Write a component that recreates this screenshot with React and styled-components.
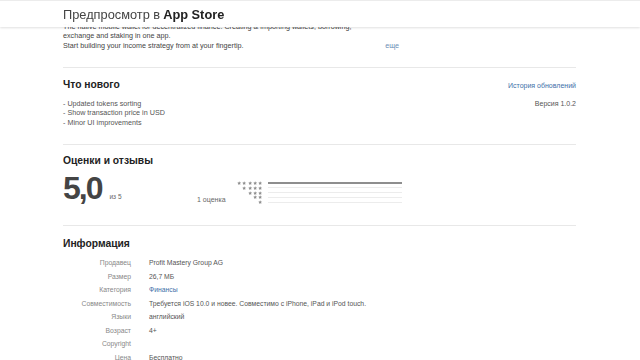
import styled, { createGlobalStyle } from 'styled-components';

const GlobalStyle = createGlobalStyle`
  html, body {
    margin: 0;
    background: #fff;
    font-family: 'Liberation Sans', Arial, sans-serif;
    color: #333;
  }
`;

const Header = styled('header')`
  position: fixed;
  top: 0;
  left: 0;
  right: 0;
  height: 27px;
  z-index: 10;
  display: flex;
  align-items: center;
  padding-left: 63px;
  background: rgba(255, 255, 255, 0.97);
  border-top: 1px solid #ececec;
  box-shadow: 0 1px 2px rgba(0, 0, 0, 0.12);
  font-size: 12.8px;
  color: #444;
  box-sizing: border-box;

  b {
    color: #222;
    margin-left: 3px;
  }
`;

const Page = styled('main')`
  width: 513px;
  margin-left: 63px;
  padding-top: 22px;
`;

const Description = styled('div')`
  position: relative;
  width: 336px;
  font-size: 7.2px;
  line-height: 9.3px;
  color: #444;
  padding-bottom: 17px;
  white-space: nowrap;
`;

const More = styled('span')`
  position: absolute;
  right: 0;
  bottom: 17px;
  color: #6b8db5;
`;

const Section = styled('section')`
  border-top: 1px solid #e8e8e8;
  padding: ${(p) => p.$pad || '11px 0 17px'};
`;

const Heading = styled('h2')`
  margin: 0;
  font-size: 10.3px;
  line-height: 12px;
  font-weight: bold;
  color: #222;
`;

const Split = styled('div')`
  display: flex;
  justify-content: space-between;
  align-items: flex-start;
`;

const Notes = styled('ul')`
  margin: 8px 0 0;
  padding: 0;
  list-style: none;
  font-size: 7.2px;
  line-height: 9.5px;
  color: #555;
`;

const Side = styled('div')`
  text-align: right;
  font-size: 7px;
  line-height: 9.5px;
  color: #555;
  padding-top: 2px;
`;

const Link = styled('div')`
  color: ${(p) => (p.$blue ? '#3e6fa8' : 'inherit')};
  margin-bottom: ${(p) => p.$gap || 0}px;
`;

const RatingRow = styled('div')`
  display: grid;
  grid-template-columns: 134px auto;
  align-items: end;
  margin-top: 5px;
`;

const Score = styled('div')`
  display: flex;
  align-items: baseline;
`;

const Big = styled('span')`
  font-size: 32px;
  line-height: 32px;
  font-weight: bold;
  letter-spacing: -2px;
  color: #444;
`;

const OutOf = styled('span')`
  font-size: 6.5px;
  color: #666;
  margin-left: 8px;
`;

const Histogram = styled('div')`
  display: flex;
  align-items: flex-end;
  gap: 11px;
`;

const Count = styled('span')`
  font-size: 7px;
  color: #666;
  padding-bottom: 1px;
`;

const Bars = styled('div')`
  display: grid;
  grid-template-columns: 26px 134px;
  column-gap: 5px;
`;

const Stars = styled('div')`
  display: flex;
  justify-content: flex-end;
  gap: 1px;
  height: 4.7px;
  align-items: center;
`;

const Track = styled('div')`
  height: 4.7px;
  display: flex;
  align-items: center;

  &::before {
    content: '';
    flex: 1;
    height: ${(p) => (p.$full ? 2 : 1)}px;
    background: ${(p) => (p.$full ? '#8e8e8e' : '#ececec')};
  }
`;

const InfoList = styled('dl')`
  margin: 6px 0 0;
  display: grid;
  grid-template-columns: 68px auto;
  column-gap: 18px;
  font-size: 6.8px;
  line-height: 13.5px;
`;

const Label = styled('dt')`
  text-align: right;
  color: #888;
  white-space: nowrap;
`;

const Value = styled('dd')`
  margin: 0;
  color: ${(p) => (p.$blue ? '#3e6fa8' : '#555')};
`;

const Star = () => (
  <svg width='4.3' height='4.3' viewBox='0 0 10 10'>
    <path d='M5 0.5l1.4 3 3.1.3-2.4 2.1.8 3.1L5 7.3 2.1 9l.8-3.1L.5 3.8l3.1-.3z' fill='#8e8e8e' />
  </svg>
);

const info = [
  ['Продавец', 'Profit Mastery Group AG'],
  ['Размер', '26,7 МБ'],
  ['Категория', 'Финансы', true],
  ['Совместимость', 'Требуется iOS 10.0 и новее. Совместимо с iPhone, iPad и iPod touch.'],
  ['Языки', 'английский'],
  ['Возраст', '4+'],
  ['Copyright', ''],
  ['Цена', 'Бесплатно'],
];

const App = () => (
  <>
    <GlobalStyle />
    <Header>
      Предпросмотр в <b>App Store</b>
    </Header>
    <Page>
      <Description>
        The native mobile wallet for decentralized finance. Creating &amp; importing wallets, borrowing,
        <br />
        exchange and staking in one app.
        <br />
        Start building your income strategy from at your fingertip.
        <More>еще</More>
      </Description>

      <Section>
        <Split>
          <div>
            <Heading>Что нового</Heading>
            <Notes>
              <li>- Updated tokens sorting</li>
              <li>- Show transaction price in USD</li>
              <li>- Minor UI improvements</li>
            </Notes>
          </div>
          <Side>
            <Link $blue $gap={9}>История обновлений</Link>
            <Link>Версия 1.0.2</Link>
          </Side>
        </Split>
      </Section>

      <Section $pad='10px 0 21px'>
        <Heading>Оценки и отзывы</Heading>
        <RatingRow>
          <Score>
            <Big>5,0</Big>
            <OutOf>из 5</OutOf>
          </Score>
          <Histogram>
            <Count>1 оценка</Count>
            <Bars>
              {[5, 4, 3, 2, 1].map((n) => [
                <Stars key={`s${n}`}>
                  {Array.from({ length: n }, (_, i) => (
                    <Star key={i} />
                  ))}
                </Stars>,
                <Track key={`t${n}`} $full={n === 5} />,
              ])}
            </Bars>
          </Histogram>
        </RatingRow>
      </Section>

      <Section $pad='12px 0 0'>
        <Heading>Информация</Heading>
        <InfoList>
          {info.map(([label, value, blue]) => [
            <Label key={`l${label}`}>{label}</Label>,
            <Value key={`v${label}`} $blue={blue}>
              {value}
            </Value>,
          ])}
        </InfoList>
      </Section>
    </Page>
  </>
);

export default App;
